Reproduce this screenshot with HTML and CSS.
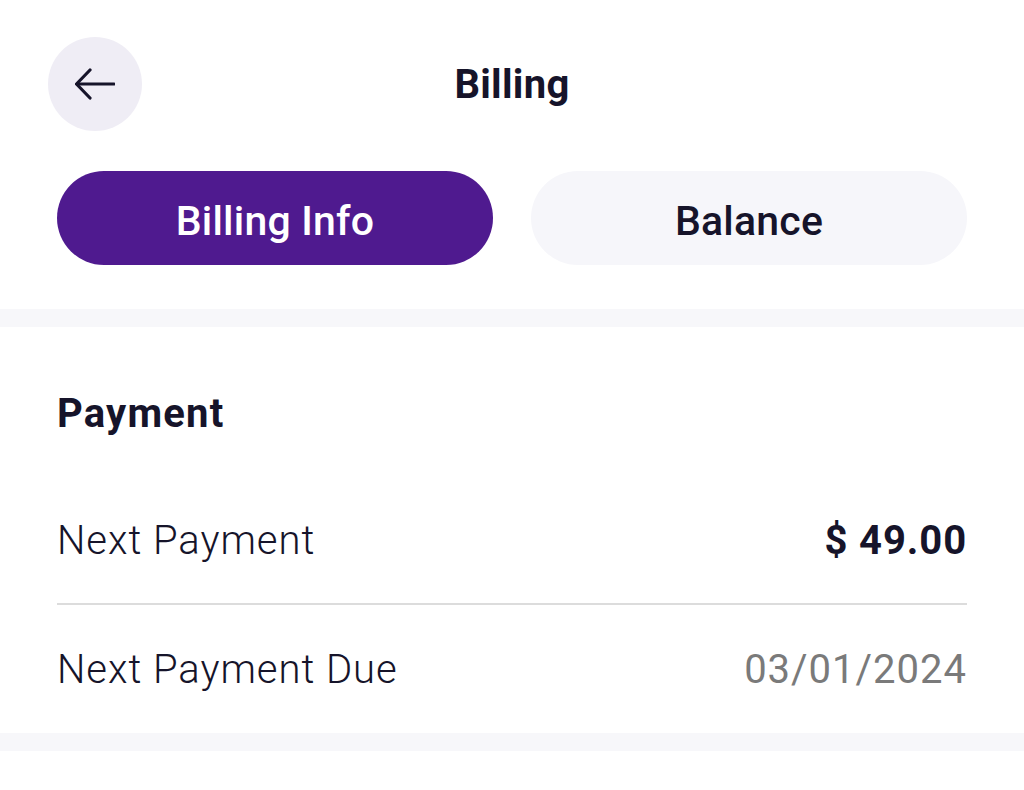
FILE: index.html
```html
<!DOCTYPE html>
<html lang="en">
<head>
<meta charset="utf-8">
<title>Billing</title>
<link rel="stylesheet" href="styles.css">
</head>
<body>
<header class="topbar">
  <div class="topbar-left">
    <button class="back-btn" aria-label="Back">
      <svg width="40" height="32" viewBox="0 0 40 32" fill="none" stroke="#16142a" stroke-width="3.2" stroke-linecap="round" stroke-linejoin="round">
        <path d="M39 16H2"/>
        <path d="M15 2L1.5 16L15 30"/>
      </svg>
    </button>
  </div>
  <h1 class="title">Billing</h1>
  <div></div>
</header>

<nav class="tabs">
  <button class="tab tab-active">Billing Info</button>
  <button class="tab">Balance</button>
</nav>

<div class="band"></div>

<section class="section">
  <h2 class="section-title">Payment</h2>
  <div class="row">
    <span class="label">Next Payment</span>
    <span class="value value-strong">$ 49.00</span>
  </div>
  <div class="row">
    <span class="label">Next Payment Due</span>
    <span class="value value-muted">03/01/2024</span>
  </div>
</section>

<div class="band band-bottom"></div>
</body>
</html>
```

FILE: styles.css
```css
* { box-sizing: border-box; }

html, body {
  margin: 0;
  padding: 0;
  background: #ffffff;
}

body {
  font-family: Roboto, "Liberation Sans", sans-serif;
  color: #16142a;
}

.topbar {
  display: grid;
  grid-template-columns: 1fr auto 1fr;
  align-items: center;
  padding: 37px 48px 0;
}

.back-btn {
  width: 94px;
  height: 94px;
  border-radius: 50%;
  border: none;
  background: #efedf5;
  display: flex;
  align-items: center;
  justify-content: center;
  padding: 0;
}

.title {
  margin: 0;
  font-size: 40px;
  font-weight: 700;
  letter-spacing: 0.3px;
}

.tabs {
  display: flex;
  gap: 38px;
  padding: 40px 57px 0;
}

.tab {
  flex: 1;
  height: 94px;
  border-radius: 47px;
  border: none;
  background: #f6f6fa;
  color: #16142a;
  font-family: Roboto, "Liberation Sans", sans-serif;
  font-size: 41px;
  font-weight: 500;
  letter-spacing: 0.2px;
  padding: 6px 0 0;
}

.tab-active {
  background: #4f1a8f;
  color: #ffffff;
}

.band {
  height: 18px;
  background: #f7f7fa;
  margin-top: 44px;
}

.section {
  padding: 60px 57px 0;
}

.section-title {
  margin: 0 0 36px;
  font-size: 40px;
  line-height: 54px;
  font-weight: 700;
  letter-spacing: 1.2px;
}

.row {
  display: flex;
  justify-content: space-between;
  align-items: center;
  height: 126px;
}

.row + .row {
  border-top: 2px solid #dcdcdc;
  height: 130px;
}

.label {
  font-size: 40px;
  font-weight: 300;
  letter-spacing: 0.95px;
}

.value {
  font-size: 40px;
}

.value-strong {
  font-weight: 700;
  letter-spacing: 0.9px;
}

.value-muted {
  color: #7a7a7a;
  font-weight: 400;
  letter-spacing: 1px;
}

.band-bottom {
  margin-top: 0;
}
```
